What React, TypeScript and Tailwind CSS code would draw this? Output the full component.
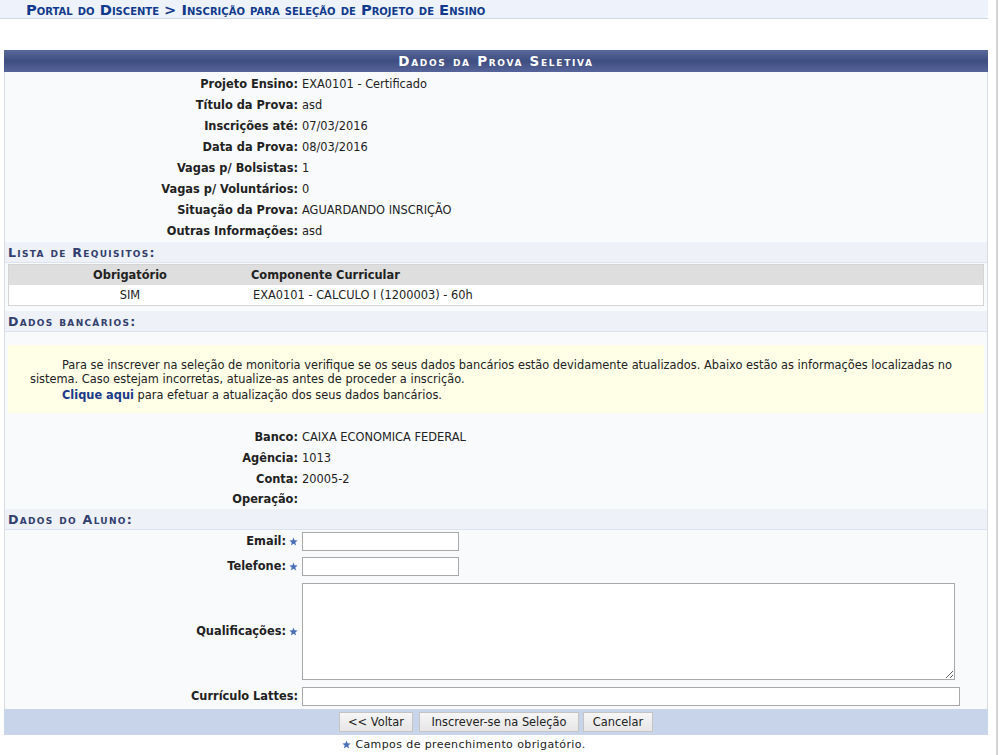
import React from "react";

const Star = () => (
  <svg width="9" height="9" viewBox="0 0 10 10" className="inline-block">
    <path d="M5 0.5 L6.2 3.6 L9.6 3.8 L7 6 L7.9 9.4 L5 7.5 L2.1 9.4 L3 6 L0.4 3.8 L3.8 3.6 Z" fill="#4a70b8" />
  </svg>
);

const InfoRow = ({ label, value, h = "h-[21px]" }: { label: string; value?: string; h?: string }) => (
  <div className={`grid grid-cols-[293px_1fr] items-center ${h}`}>
    <div className="text-right font-bold text-[#222]">{label}</div>
    <div className="pl-[4px] text-[#222]">{value}</div>
  </div>
);

const SubHeader = ({ children }: { children: React.ReactNode }) => (
  <div className="h-[21px] bg-[#eef1f8] border-b border-[#dde3ee] flex items-center pl-[3px] font-bold text-[12.6px] text-[#333f6e] tracking-[1.3px] [font-variant:small-caps]">
    {children}
  </div>
);

const btn = "h-[20px] bg-gradient-to-b from-[#f6f6f6] to-[#e6e6e6] border border-[#c4c4c4] text-[#222] flex items-center justify-center";

export default function App() {
  return (
    <div className="relative w-[1000px] h-[755px] bg-white text-[11.4px] leading-[13px] text-[#222] overflow-hidden [font-family:'DejaVu_Sans',Verdana,sans-serif]">
      <div className="absolute right-[2px] top-0 h-full w-[2px] bg-[#d4d4d4]" />
      <div className="w-[988px] h-[19px] bg-[#eef3fb] border-b border-[#d0d8e4] pl-[26px] flex items-center">
        <span className="font-bold text-[14.7px] text-[#113a8c] [font-variant:small-caps]">
          Portal do Discente &gt; Inscrição para seleção de Projeto de Ensino
        </span>
      </div>
      <div className="ml-[4px] w-[984px] mt-[31px]">
        <div className="h-[22px] bg-gradient-to-b from-[#5a689a] via-[#3f4e80] to-[#56649a] flex items-center justify-center text-white font-bold text-[13.5px] tracking-[1.7px] [font-variant:small-caps]">
          Dados da Prova Seletiva
        </div>
        <div className="bg-[#f9fafc] border-l border-r border-[#d8dce4] pt-[2px]">
          <InfoRow label="Projeto Ensino:" value="EXA0101 - Certificado" />
          <InfoRow label="Título da Prova:" value="asd" />
          <InfoRow label="Inscrições até:" value="07/03/2016" />
          <InfoRow label="Data da Prova:" value="08/03/2016" />
          <InfoRow label="Vagas p/ Bolsistas:" value="1" />
          <InfoRow label="Vagas p/ Voluntários:" value="0" />
          <InfoRow label="Situação da Prova:" value="AGUARDANDO INSCRIÇÃO" />
          <InfoRow label="Outras Informações:" value="asd" />
          <SubHeader>Lista de Requisitos:</SubHeader>
          <div className="px-[3px] pt-[1px] pb-[5px]">
            <div className="border border-[#d4d4d4] bg-white">
              <div className="grid grid-cols-[242px_1fr] h-[20px] items-center bg-[#dedede] font-bold">
                <div className="text-center">Obrigatório</div>
                <div>Componente Curricular</div>
              </div>
              <div className="grid grid-cols-[242px_1fr] h-[20px] items-center">
                <div className="text-center">SIM</div>
                <div className="pl-[2px]">EXA0101 - CALCULO I (1200003) - 60h</div>
              </div>
            </div>
          </div>
          <SubHeader>Dados bancários:</SubHeader>
          <div className="pt-[13px] pb-[14px] px-[3px]">
            <div className="bg-[#fffee6] h-[68px] pt-[13px] pl-[22px] pr-[22px]">
              <p className="indent-[32px] leading-[14px]">
                Para se inscrever na seleção de monitoria verifique se os seus dados bancários estão devidamente atualizados. Abaixo estão as informações localizadas no sistema. Caso estejam incorretas, atualize-as antes de proceder a inscrição.
              </p>
              <p className="indent-[32px] leading-[14px] mt-[2px]">
                <a className="font-bold text-[#1b3a88]">Clique aqui</a> para efetuar a atualização dos seus dados bancários.
              </p>
            </div>
          </div>
          <InfoRow label="Banco:" value="CAIXA ECONOMICA FEDERAL" />
          <InfoRow label="Agência:" value="1013" />
          <InfoRow label="Conta:" value="20005-2" h="h-[20px]" />
          <InfoRow label="Operação:" value="" h="h-[20px]" />
          <SubHeader>Dados do Aluno:</SubHeader>
          <div className="grid grid-cols-[293px_1fr] items-center pt-[2px] pb-[3px]">
            <div className="text-right font-bold flex items-center justify-end gap-[3px]">Email: <Star /></div>
            <div className="pl-[4px]"><input className="w-[157px] h-[19px] border border-[#a9a9a9] bg-white block" /></div>
          </div>
          <div className="grid grid-cols-[293px_1fr] items-center py-[3px]">
            <div className="text-right font-bold flex items-center justify-end gap-[3px]">Telefone: <Star /></div>
            <div className="pl-[4px]"><input className="w-[157px] h-[19px] border border-[#a9a9a9] bg-white block" /></div>
          </div>
          <div className="grid grid-cols-[293px_1fr] items-center py-[4px]">
            <div className="text-right font-bold flex items-center justify-end gap-[3px]">Qualificações: <Star /></div>
            <div className="pl-[4px]"><textarea className="w-[653px] h-[97px] border border-[#a9a9a9] bg-white block resize" /></div>
          </div>
          <div className="grid grid-cols-[293px_1fr] items-center py-[3px]">
            <div className="text-right font-bold">Currículo Lattes:</div>
            <div className="pl-[4px]"><input className="w-[658px] h-[19px] border border-[#a9a9a9] bg-white block" /></div>
          </div>
        </div>
        <div className="h-[26px] bg-[#c8d4e9] flex items-center justify-center">
          <button className={`${btn} w-[74px]`}>&lt;&lt; Voltar</button>
          <button className={`${btn} w-[160px] ml-[6px]`}>Inscrever-se na Seleção</button>
          <button className={`${btn} w-[70px] ml-[4px]`}>Cancelar</button>
        </div>
        <div className="flex items-center justify-center gap-[4px] mt-[3px] mr-[64px] text-[11px] tracking-[0.4px]">
          <Star /> Campos de preenchimento obrigatório.
        </div>
      </div>
    </div>
  );
}
